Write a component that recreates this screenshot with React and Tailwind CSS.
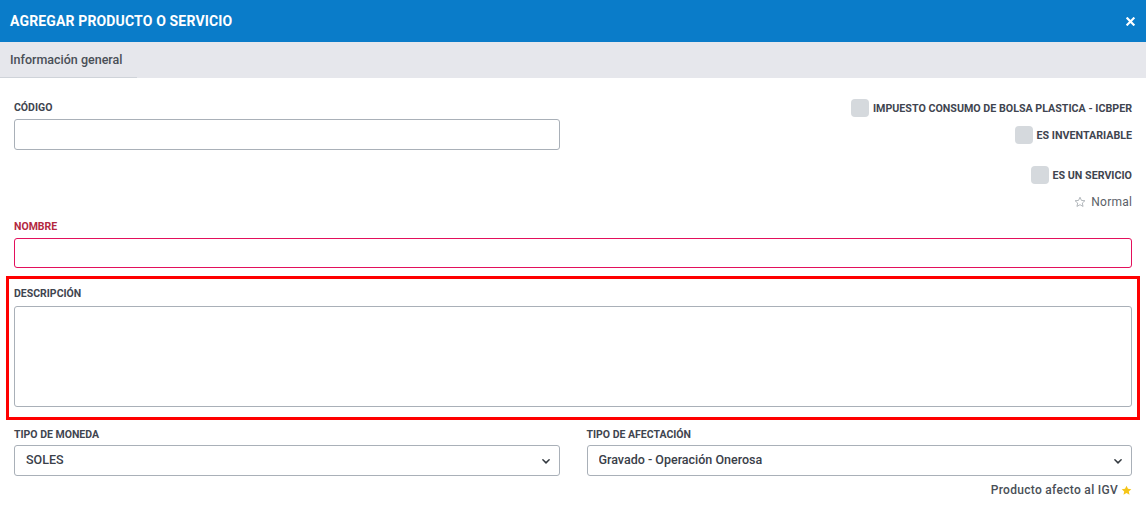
import { useState } from 'react';

const Check = ({ label }) => (
  <label className="flex items-center gap-[4px] h-[18px] cursor-pointer">
    <span className="w-[18px] h-[18px] rounded-[4px] bg-[#d5d9dd]" />
    <span className="text-[10.7px] font-bold text-[#3f4550] translate-y-[1px]">{label}</span>
  </label>
);

const Chevron = () => (
  <svg className="absolute right-[9px] top-1/2 -translate-y-1/2 w-[10px] h-[10px] pointer-events-none" viewBox="0 0 16 16" fill="none">
    <path d="M3 6l5 5 5-5" stroke="#343a40" strokeWidth="2.4" strokeLinecap="round" strokeLinejoin="round" />
  </svg>
);

const SelectField = ({ label, value, options, onChange }) => (
  <div>
    <div className="text-[10.5px] leading-[12px] font-bold text-[#3f4550]">{label}</div>
    <div className="relative mt-[4px]">
      <select
        value={value}
        onChange={(e) => onChange(e.target.value)}
        className="w-full h-[31px] appearance-none rounded-[3px] border border-[#a9b0b8] bg-white pl-[11px] pr-8 text-[12.5px] font-medium text-[#3a4049] outline-none"
      >
        {options.map((o) => (
          <option key={o}>{o}</option>
        ))}
      </select>
      <Chevron />
    </div>
  </div>
);

export default function App() {
  const [moneda, setMoneda] = useState('SOLES');
  const [afectacion, setAfectacion] = useState('Gravado - Operación Onerosa');

  return (
    <div className="w-[1146px] h-[507px] bg-white font-['Roboto',sans-serif] overflow-hidden">
      {/* Header */}
      <div className="h-[42px] bg-[#0a7cc9] flex items-center justify-between pl-[10px] pr-[11px]">
        <h1 className="text-[14px] tracking-[0.15px] font-bold text-white">AGREGAR PRODUCTO O SERVICIO</h1>
        <button className="text-white">
          <svg className="w-[9px] h-[9px]" viewBox="0 0 10 10">
            <path d="M1.5 1.5l7 7M8.5 1.5l-7 7" stroke="white" strokeWidth="2.4" strokeLinecap="square" />
          </svg>
        </button>
      </div>

      {/* Tabs */}
      <div className="h-[36px] bg-[#e6e7ec] flex items-end">
        <div className="w-[137px] h-full flex items-center pl-[10px] pt-[1px] border-b border-[#cfd3d9] text-[12.5px] font-medium text-[#4a4f57]">
          Información general
        </div>
      </div>

      {/* Body */}
      <div className="px-[14px]">
        <div className="flex justify-between items-start">
          <div className="w-[546px] pt-[24px]">
            <div className="text-[10.5px] leading-[12px] font-bold text-[#3f4550]">CÓDIGO</div>
            <input className="mt-[5px] w-full h-[31px] rounded-[3px] border border-[#a9b0b8] outline-none px-2 text-[12px]" />
          </div>
          <div className="pt-[21px] flex flex-col items-end">
            <Check label="IMPUESTO CONSUMO DE BOLSA PLASTICA - ICBPER" />
            <div className="mt-[9px]"><Check label="ES INVENTARIABLE" /></div>
            <div className="mt-[22px]"><Check label="ES UN SERVICIO" /></div>
            <div className="mt-[11px] flex items-center gap-[5px] h-[14px] text-[12px] tracking-[0.2px] text-[#5a6068]">
              <svg className="w-[12px] h-[12px]" viewBox="0 0 24 24" fill="none">
                <path d="M12 2.5l2.9 6.3 6.9.7-5.2 4.6 1.5 6.8L12 17.4l-6.1 3.5 1.5-6.8L2.2 9.5l6.9-.7z" stroke="#9aa0a6" strokeWidth="1.5" strokeLinejoin="round" />
              </svg>
              <span>Normal</span>
            </div>
          </div>
        </div>

        <div className="mt-[12px]">
          <div className="text-[10.5px] leading-[12px] font-bold text-[#b3283f]">NOMBRE</div>
          <input className="mt-[5px] w-full h-[30px] rounded-[3px] border border-[#e3105c] outline-none px-2 text-[12px]" />
        </div>

        <div className="mt-[8px] -mx-[8px] border-[3px] border-[#ff0000] px-[5px] pt-[9px] pb-[10px]">
          <div className="text-[10.5px] leading-[12px] font-bold text-[#3f4550]">DESCRIPCIÓN</div>
          <textarea className="block mt-[6px] w-full h-[101px] resize-none rounded-[3px] border border-[#a9b0b8] outline-none px-2 py-1 text-[12px]" />
        </div>

        <div className="mt-[9px] grid grid-cols-2 gap-[27px]">
          <SelectField label="TIPO DE MONEDA" value={moneda} options={['SOLES', 'DÓLARES']} onChange={setMoneda} />
          <div>
            <SelectField
              label="TIPO DE AFECTACIÓN"
              value={afectacion}
              options={['Gravado - Operación Onerosa', 'Exonerado - Operación Onerosa', 'Inafecto - Operación Onerosa']}
              onChange={setAfectacion}
            />
            <div className="mt-[5px] flex justify-end items-center gap-[3px] text-[12px] tracking-[0.3px] font-medium text-[#4a4f57]">
              <span>Producto afecto al IGV</span>
              <svg className="w-[11px] h-[11px]" viewBox="0 0 24 24">
                <path d="M12 1.5l3.2 6.8 7.3.8-5.5 5 1.6 7.3L12 17.6l-6.6 3.8 1.6-7.3-5.5-5 7.3-.8z" fill="#f5c518" />
              </svg>
            </div>
          </div>
        </div>
      </div>
    </div>
  );
}
